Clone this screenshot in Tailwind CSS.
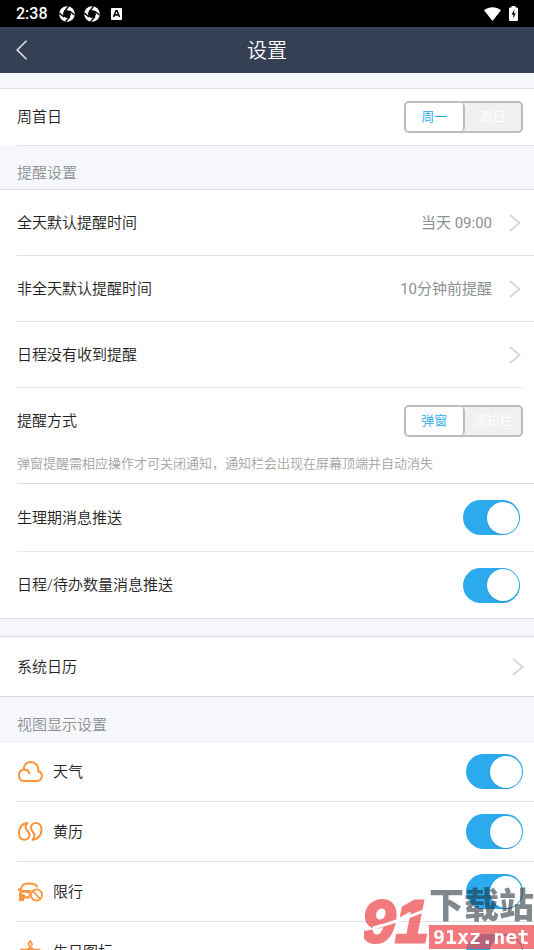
<!DOCTYPE html>
<html lang="zh-CN">
<head>
<meta charset="utf-8">
<meta name="viewport" content="width=device-width, initial-scale=1">
<title>设置</title>
<script src="https://cdn.jsdelivr.net/npm/@tailwindcss/browser@4"></script>
</head>
<body class="h-screen flex flex-col overflow-hidden bg-[#f6f7fa] text-[15px] leading-5 text-[#222] font-[350] font-[Roboto,'Noto_Sans_CJK_SC',sans-serif]">
<svg class="hidden" aria-hidden="true">
  <symbol id="chevron" viewBox="0 0 12 18"><path d="M1 1l9.500 8L1 17" fill="none" stroke="#d3d5d8" stroke-width="1.800"/></symbol>
  <symbol id="aperture" viewBox="0 0 16 16">
    <circle cx="8" cy="8" r="7.800" fill="#fff"/>
    <path d="M5 5.500L8 4l3.300 1.200L12 8.500 10.500 11.500 7.200 12 4.300 10.300 4 7.300z" fill="#000"/>
    <path d="M5 6L9.500.300M10.500 5l5 4M11 10.500L6.500 15.700M5 11L.300 7" stroke="#000" stroke-width="1.400"/>
  </symbol>
</svg>

<div class="h-[27px] shrink-0 bg-black text-white flex items-center pl-4 pr-4">
  <span class="text-[16px] font-medium">2:38</span>
  <svg class="w-4 h-4 ml-[11px]"><use href="#aperture"/></svg>
  <svg class="w-4 h-4 ml-[9px]"><use href="#aperture"/></svg>
  <svg class="w-[11px] h-3 ml-[11px]" viewBox="0 0 11 12"><rect width="11" height="12" rx="1" fill="#fff"/><path d="M2.500 9L5 2.800h1L8.500 9M3.500 7h4" fill="none" stroke="#000" stroke-width="1.500"/></svg>
  <svg class="w-[17px] h-[14px] ml-auto" viewBox="0 0 17 14"><path d="M0 3.300C5-.800 12-.800 17 3.300L8.500 14z" fill="#fff"/></svg>
  <svg class="w-[9px] h-[15px] ml-2" viewBox="0 0 9 15"><path d="M2.500 1.500V0h4v1.500H8q1 0 1 1V14q0 1-1 1H1q-1 0-1-1V2.500q0-1 1-1z" fill="#fff"/><path d="M5.500 3.500L2.500 8.500h2L4 12.500 6.800 7.300H5z" fill="#000"/></svg>
</div>

<header class="h-[46px] shrink-0 bg-[#364055] text-white grid grid-cols-[1fr_auto_1fr] items-center">
  <button type="button" aria-label="返回" class="justify-self-start pl-4 pr-4 py-2"><svg class="w-3 h-5" viewBox="0 0 12 20"><path d="M10.500 .800L1.200 10l9.300 9.200" fill="none" stroke="#e6e8ec" stroke-width="1.500"/></svg></button>
  <h1 class="text-[20px] leading-7 pt-[2px]">设置</h1>
</header>

<main class="flex-1 min-h-0 overflow-y-auto [scrollbar-width:none]">
  <div class="h-4 border-b border-[#dcdfe3]"></div>
  <section class="bg-white pl-[17px]">
    <div class="h-[57px] border-b border-[#e0e2e5] flex items-center justify-between pr-[11px]">
      <span>周首日</span>
      <div role="radiogroup" aria-label="周首日" class="w-[119px] h-8 flex rounded-[5px] border-2 border-[#bdbdbd] bg-[#f0f0f0] text-[13px] text-white overflow-hidden">
        <label class="flex-1 flex items-center justify-center bg-white text-[#2babee] border-r-2 border-[#bdbdbd] rounded-r-[4px]"><input type="radio" name="week" checked class="sr-only">周一</label>
        <label class="flex-1 flex items-center justify-center"><input type="radio" name="week" class="sr-only">周日</label>
      </div>
    </div>
  </section>

  <h2 class="h-11 pt-[17px] pl-[17px] border-b border-[#dcdfe3] text-[#8b9094]">提醒设置</h2>
  <section class="bg-white pl-[17px] border-b border-[#d9dde1]">
    <button type="button" class="w-full h-[66px] border-b border-[#e0e2e5] flex items-center pr-[13px]"><span>全天默认提醒时间</span><span class="ml-auto mr-[17px] font-normal text-[#8b9094]">当天 09:00</span><svg class="w-3 h-[18px]"><use href="#chevron"/></svg></button>
    <button type="button" class="w-full h-[66px] border-b border-[#e0e2e5] flex items-center pr-[13px]"><span>非全天默认提醒时间</span><span class="ml-auto mr-[17px] font-normal text-[#8b9094]">10分钟前提醒</span><svg class="w-3 h-[18px]"><use href="#chevron"/></svg></button>
    <div class="pr-[11px]"><button type="button" class="w-full h-[66px] border-b border-[#e0e2e5] flex items-center pr-[2px]"><span>日程没有收到提醒</span><svg class="w-3 h-[18px] ml-auto"><use href="#chevron"/></svg></button></div>
    <div class="h-24 border-b border-[#d9dbde] pt-[17px] pr-[11px]">
      <div class="flex items-center justify-between">
        <span>提醒方式</span>
        <div role="radiogroup" aria-label="提醒方式" class="w-[119px] h-8 flex rounded-[5px] border-2 border-[#bdbdbd] bg-[#f0f0f0] text-[13px] text-white overflow-hidden">
          <label class="flex-1 flex items-center justify-center bg-white text-[#2babee] border-r-2 border-[#bdbdbd] rounded-r-[4px]"><input type="radio" name="mode" checked class="sr-only">弹窗</label>
          <label class="flex-1 flex items-center justify-center"><input type="radio" name="mode" class="sr-only">通知栏</label>
        </div>
      </div>
      <p class="mt-[17px] text-[13px] text-[#a3a3a3]">弹窗提醒需相应操作才可关闭通知，通知栏会出现在屏幕顶端并自动消失</p>
    </div>
    <label class="h-[68px] border-b border-[#e8eaec] flex items-center justify-between pr-[14px]"><span>生理期消息推送</span><input type="checkbox" checked class="appearance-none w-[57px] h-[35px] rounded-full bg-[#2babee] flex items-center justify-end pr-px before:content-[''] before:size-8 before:rounded-full before:bg-white before:shadow-sm"></label>
    <label class="h-[66px] flex items-center justify-between pr-[14px]"><span>日程/待办数量消息推送</span><input type="checkbox" checked class="appearance-none w-[57px] h-[35px] rounded-full bg-[#2babee] flex items-center justify-end pr-px before:content-[''] before:size-8 before:rounded-full before:bg-white before:shadow-sm"></label>
  </section>

  <section class="mt-[17px] bg-white border-y border-[#d9dde1]">
    <button type="button" class="w-full h-[59px] flex items-center justify-between pl-[17px] pr-[10px]"><span>系统日历</span><svg class="w-3 h-[18px]"><use href="#chevron"/></svg></button>
  </section>

  <h2 class="h-[45px] pt-[18px] pl-[17px] border-b border-[#e8eaec] text-[#8b9094]">视图显示设置</h2>
  <section class="bg-white pl-[17px]">
    <label class="h-[60px] border-b border-[#e0e2e5] flex items-center pr-[11px]">
      <svg class="w-[26px] h-6 mr-[10px]" viewBox="0 0 26 24" fill="none" stroke="#fa9339" stroke-width="2" stroke-linecap="round"><path d="M7 21h13a5 5 0 0 0 1.200-9.800c1-5-3-9.200-7.200-9.200-4.300 0-7.300 3-7.300 7.500C3.500 10 2 12.500 2 15.500c0 3.300 2 5.500 5 5.500zM7 9.800c2.500-.300 4.800.800 5.300 3.500"/></svg>
      <span>天气</span><input type="checkbox" checked class="appearance-none ml-auto w-[57px] h-[35px] rounded-full bg-[#2babee] flex items-center justify-end pr-px before:content-[''] before:size-8 before:rounded-full before:bg-white before:shadow-sm"></label>
    <label class="h-[60px] border-b border-[#e0e2e5] flex items-center pr-[11px]">
      <svg class="w-[26px] h-6 mr-[10px]" viewBox="0 0 26 24" fill="none" stroke="#fa9339" stroke-width="2" stroke-linejoin="round"><path d="M10.500 3C5 3 2 8 2 13c0 4 2 6.800 5.500 6.800 3 0 5-2.300 5-4.800 0-3.500-4-4.500-4-8 0-1.500.800-2.800 2-4zM15.500 19.800c5.500 0 9-5 9-10 0-4-2.200-6.800-5.500-6.800-3 0-5 2.300-5 4.800 0 3.500 3.500 4.500 3.500 8 0 1.500-.800 2.800-2 4z"/></svg>
      <span>黄历</span><input type="checkbox" checked class="appearance-none ml-auto w-[57px] h-[35px] rounded-full bg-[#2babee] flex items-center justify-end pr-px before:content-[''] before:size-8 before:rounded-full before:bg-white before:shadow-sm"></label>
    <label class="h-[60px] border-b border-[#e0e2e5] flex items-center pr-[11px]">
      <svg class="w-[26px] h-6 mr-[10px]" viewBox="0 0 26 24" fill="none" stroke="#fa9339"><path d="M3.500 9.500C5 5 6.500 3.500 12.500 3.500c4.500 0 6.500 1 8 3.500" stroke-width="1.800"/><path fill="#fa9339" stroke="none" fill-rule="evenodd" d="M1 8.500h2.500l1 1.500H14L12.800 13v5.500H7V21H2v-7.500L3 11H1zM5 12.500v1.500l3 .800V16.300h3.500V13z"/><circle cx="19.500" cy="15" r="5.600" stroke-width="1.800"/><path d="M15.800 11l7.500 8" stroke-width="1.800"/></svg>
      <span>限行</span><input type="checkbox" checked class="appearance-none ml-auto w-[57px] h-[35px] rounded-full bg-[#2babee] flex items-center justify-end pr-px before:content-[''] before:size-8 before:rounded-full before:bg-white before:shadow-sm"></label>
    <label class="h-[60px] border-b border-[#e0e2e5] flex items-center pr-[11px]">
      <svg class="w-[26px] h-6 mr-[10px]" viewBox="0 0 26 24" fill="none" stroke="#fa9339" stroke-width="1.600"><path d="M13.300 1c-3 3.500-1.500 5 0 5s3-1.500 0-5zM13.300 6v4M11.500 10V8h3.600v2M4 22V9.500h18.500V22zM4 16l4 2 5-2 5 2 4.500-2"/></svg>
      <span>生日图标</span><input type="checkbox" checked class="appearance-none ml-auto w-[57px] h-[35px] rounded-full bg-[#2babee] flex items-center justify-end pr-px before:content-[''] before:size-8 before:rounded-full before:bg-white before:shadow-sm"></label>
  </section>
</main>

<!-- Site mark in the lower right corner -->
<div class="fixed right-0 bottom-0 w-[170px] h-[62px] flex items-start pointer-events-none">
  <svg class="w-[65px] h-[62px] shrink-0" viewBox="0 0 65 62" role="img" aria-label="91">
    <text x="-2" y="54" opacity="0.720" fill="#ed474b" stroke="#ed474b" stroke-width="3" font-family="Liberation Sans, sans-serif" font-weight="bold" font-style="italic" font-size="60">91</text>
    <path d="M9 40Q30 35 65 21" stroke="#fff" stroke-width="3" fill="none"/>
  </svg>
  <div class="flex-1 min-w-0">
    <div class="h-[37px] pt-px flex items-center text-[35px] font-black whitespace-nowrap text-[#17262f]/55">下载站</div>
    <div class="h-6 flex items-center pl-1 bg-[#ed474b]/72 text-white text-[20px] font-bold font-['DejaVu_Sans_Mono',monospace]">91xz.net</div>
  </div>
</div>
</body>
</html>
